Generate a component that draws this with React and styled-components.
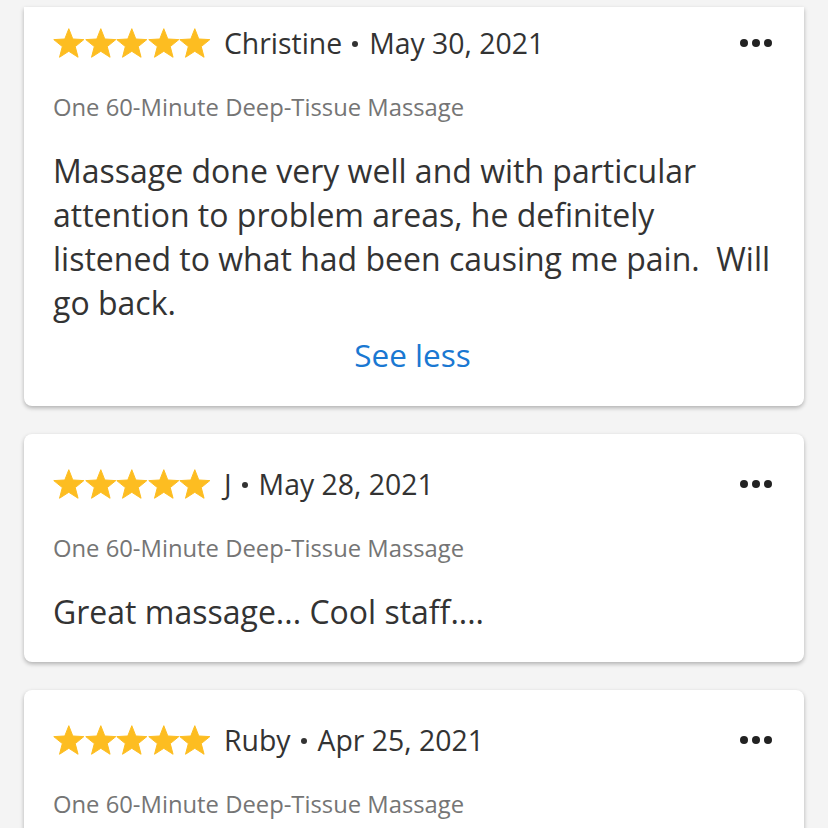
import React from 'react';
import styled, { createGlobalStyle } from 'styled-components';

const GlobalStyle = createGlobalStyle`
  html, body {
    margin: 0;
    padding: 0;
    background: #f4f4f4;
    font-family: "Open Sans", "Liberation Sans", sans-serif;
  }
`

const Page = styled.div`
  display: flex;
  flex-direction: column;
  gap: 28px;
  padding: 7px 24px 0;
  height: 828px;
  overflow: hidden;
  box-sizing: border-box;
`

const Card = styled.div`
  background: #fff;
  border-radius: ${p => (p.$first ? '0 0 8px 8px' : '8px')};
  box-shadow: 0 2px 4px rgba(0, 0, 0, 0.28);
  padding: ${p => (p.$first ? '16px' : '30px')} 32px ${p => (p.$first ? '29px' : '28px')} 29px;
  flex-shrink: 0;
`

const Header = styled.div`
  display: flex;
  align-items: center;
  height: 40px;
`

const Stars = styled.div`
  display: flex;
  margin-right: 13px;
`

const Author = styled.div`
  font-size: 28.4px;
  color: #333;
  flex: 1;
  white-space: nowrap;
  display: flex;
  align-items: center;
`

const Bullet = styled.span`
  width: 6px;
  height: 6px;
  border-radius: 50%;
  background: #333;
  margin: 2px 11px 0 10px;
`

const Dots = styled.div`
  display: flex;
  gap: 4px;
  span {
    width: 8px;
    height: 8px;
    border-radius: 50%;
    background: #222;
  }
`

const Service = styled.div`
  font-size: 23.8px;
  line-height: 32px;
  color: #757575;
  margin-top: 28px;
`

const Body = styled.div`
  font-size: 32px;
  line-height: 44px;
  color: #333;
  margin-top: 26px;
  white-space: pre-wrap;
`

const SeeLess = styled.div`
  text-align: center;
  font-size: 31.5px;
  line-height: 44px;
  color: #1a78d2;
  margin-top: 8px;
`

const starPoints = (() => {
  const pts = []
  for (let i = 0; i < 10; i++) {
    const r = i % 2 === 0 ? 16 : 6.9
    const a = (-90 + i * 36) * Math.PI / 180
    pts.push(`${(16 + r * Math.cos(a)).toFixed(2)},${(16.5 + r * Math.sin(a)).toFixed(2)}`)
  }
  return pts.join(' ')
})()

const Star = () => (
  <svg width="31.6" height="31" viewBox="0 0 32 31">
    <polygon points={starPoints} fill="#fdbd21" strokeLinejoin="round" stroke="#fdbd21" strokeWidth="1" />
  </svg>
)

const reviews = [
  {
    name: 'Christine',
    date: 'May 30, 2021',
    text: 'Massage done very well and with particular attention to problem areas, he definitely listened to what had been causing me pain.  Will go back.',
    expanded: true,
  },
  { name: 'J', date: 'May 28, 2021', text: 'Great massage... Cool staff....' },
  { name: 'Ruby', date: 'Apr 25, 2021' },
]

const Review = ({ review, first }) => (
  <Card $first={first}>
    <Header>
      <Stars>
        {[0, 1, 2, 3, 4].map(i => <Star key={i} />)}
      </Stars>
      <Author>
        {review.name}<Bullet />{review.date}
      </Author>
      <Dots><span /><span /><span /></Dots>
    </Header>
    <Service>One 60-Minute Deep-Tissue Massage</Service>
    {review.text && <Body>{review.text}</Body>}
    {review.expanded && <SeeLess>See less</SeeLess>}
  </Card>
)

export default function App() {
  return (
    <>
      <GlobalStyle />
      <Page>
        {reviews.map((r, i) => <Review key={i} review={r} first={i === 0} />)}
      </Page>
    </>
  )
}
